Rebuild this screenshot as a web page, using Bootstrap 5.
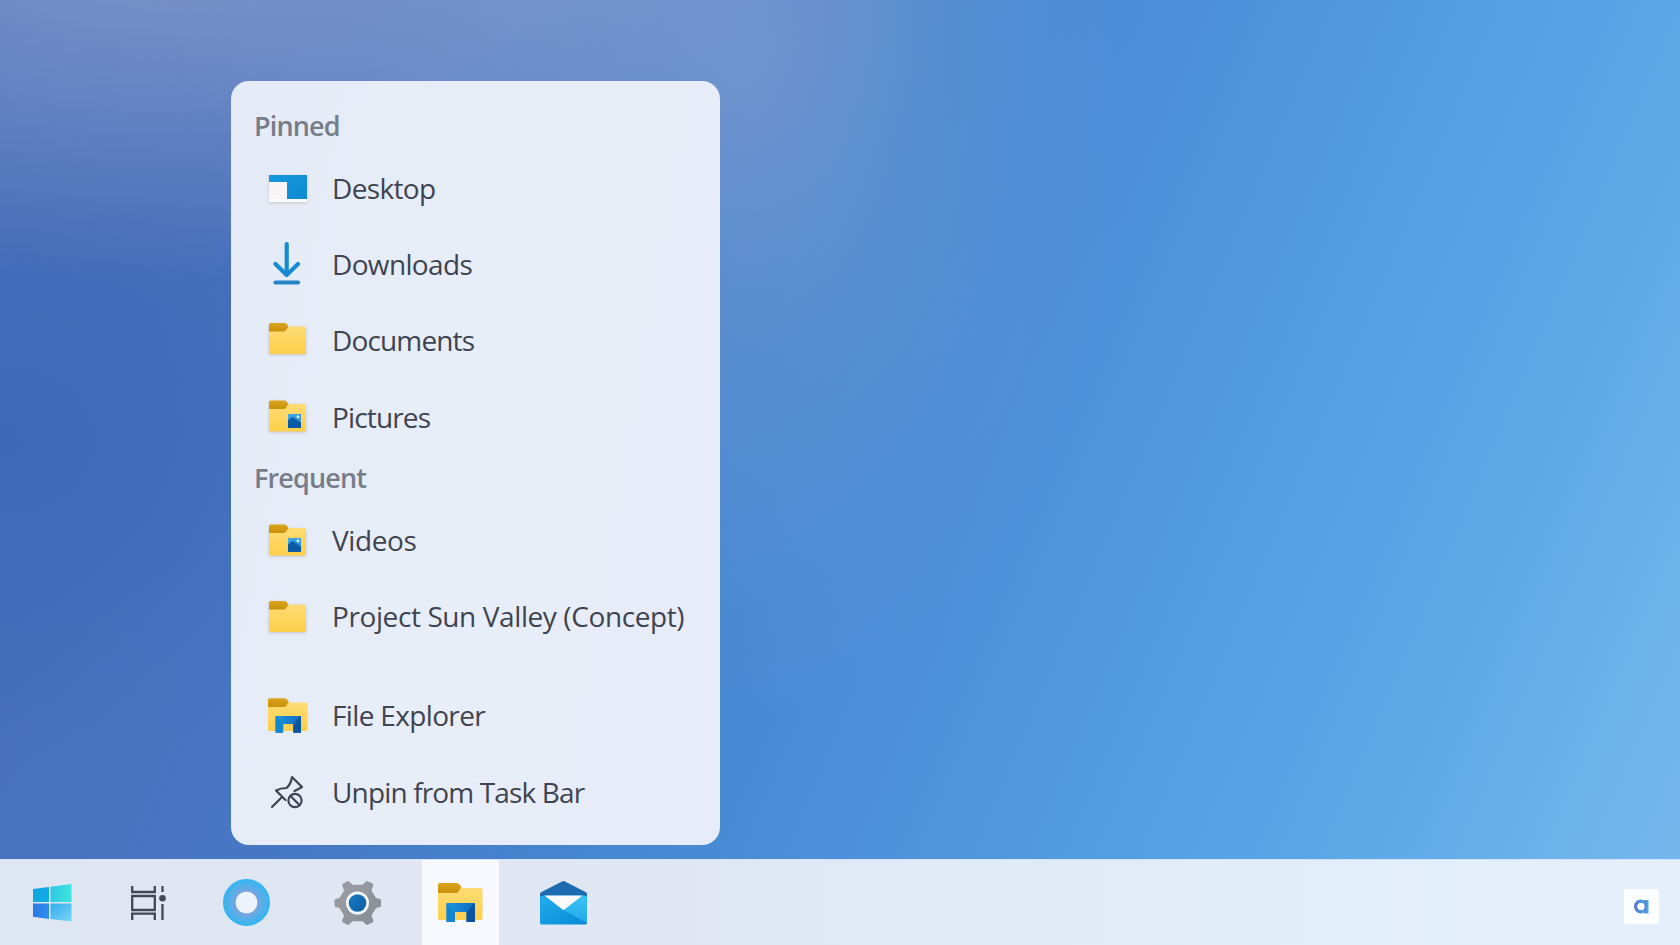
<!DOCTYPE html>
<html lang="en">
<head>
  <meta charset="UTF-8" />
  <meta name="viewport" content="width=device-width, initial-scale=1.0" />
  <title>Desktop</title>
  <link href="https://cdn.jsdelivr.net/npm/bootstrap@5.3.3/dist/css/bootstrap.min.css" rel="stylesheet" />
  <style>
    body {
      font-family: "Open Sans", "Noto Sans", sans-serif;
      color: #3f4450;
      background:
        radial-gradient(ellipse 760px 330px at 160px -50px, rgba(128,150,202,.95), rgba(125,148,200,0)),
        radial-gradient(ellipse 420px 260px at 560px -20px, rgba(108,148,205,.85), rgba(108,148,205,0)),
        radial-gradient(ellipse 380px 660px at 750px 60px, rgba(112,150,208,.9), rgba(104,150,211,.5) 45%, rgba(104,150,213,0)),
        radial-gradient(ellipse 420px 330px at 0 440px, rgba(50,98,178,.5), rgba(50,98,178,0)),
        linear-gradient(113deg, #466fba 0%, #4670bb 14%, #4874bf 22%, #4778c5 32%, #4586d0 45%, #4a8ed8 55%, #5099de 66%, #56a3e5 76%, #5ca9e7 83%, #69b2eb 91%, #77b9ed 100%);
    }

    /* jump list */
    .jump-list {
      width: 489px;
      height: 764px;
      margin-left: 231px;
      margin-bottom: 14px;
      padding: 22px 23px 0;
      border-radius: 18px;
      background: linear-gradient(100deg, #e5ebf6, #e8eef8 45%, #e7ecf8);
    }
    .jump-heading {
      height: 47px;
      font-size: 27px;
      font-weight: 600;
      color: #777c89;
    }
    .jump-item {
      height: 76.3px;
      padding-left: 12px;
      gap: 23px;
      font-size: 28px;
      white-space: nowrap;
    }
    .jump-item svg { width: 43px; height: 43px; flex: none; overflow: visible; }
    .jump-item span { margin-top: -1px; }
    .jump-gap { height: 23px; }

    /* tracking, tight to loose */
    .track-2 { letter-spacing: -.85px; }
    .track-3 { letter-spacing: -.65px; }
    .track-4 { letter-spacing: -.4px; }

    /* taskbar */
    .taskbar {
      height: 86px;
      border-top: 1px solid #d5e4f6;
      background: linear-gradient(90deg, #dee6f1, #e0e7f3 25%, #e0e8f4 45%, #e1edf9 75%, #e4effb);
    }
    .task-btn { height: 85px; }
    .task-btn svg { overflow: visible; }
    .task-start { width: 104px; }
    .task-view { width: 88px; }
    .task-cortana { width: 109px; }
    .task-settings { width: 121px; padding-right: 8px; }
    .task-files { width: 77px; background: #f7f9fe; }
    .task-mail { width: 129px; }
    .tray-logo { width: 35px; height: 35px; margin: 8px 21px 0 0; background: #fbfdff; }
  </style>
</head>
<body class="vh-100 overflow-hidden d-flex flex-column justify-content-end">

  <!-- shared icon parts -->
  <svg width="0" height="0" class="position-absolute">
    <defs>
      <linearGradient id="gFolder" x2="0" y2="1"><stop stop-color="#fedb75"/><stop offset="1" stop-color="#fdcf49"/></linearGradient>
      <linearGradient id="gTab" x2="0" y2="1"><stop stop-color="#dca51d"/><stop offset="1" stop-color="#c8900b"/></linearGradient>
      <linearGradient id="gBlue" x2="1" y2="1"><stop stop-color="#1697dc"/><stop offset="1" stop-color="#0d8bd3"/></linearGradient>
      <linearGradient id="gPic" x2="1" y2="1"><stop stop-color="#2d9be0"/><stop offset=".5" stop-color="#0b67b5"/><stop offset="1" stop-color="#0b4f94"/></linearGradient>
      <linearGradient id="gArch" x2="1" y2="0"><stop stop-color="#2097e0"/><stop offset="1" stop-color="#0d6cbd"/></linearGradient>
      <filter id="soft" x="-20%" y="-20%" width="140%" height="150%"><feDropShadow dx="0" dy="1" stdDeviation="1.5" flood-color="#7a6a70" flood-opacity=".35"/></filter>
      <symbol id="folder" viewBox="0 0 43 43" overflow="visible">
        <g filter="url(#soft)">
          <path d="M3 9h15l3-2h17.500q1.500 0 1.500 1.500V33q0 1.500-1.500 1.500h-34Q3 34.500 3 33z" fill="url(#gFolder)"/>
          <path d="M3 5q0-1.500 1.500-1.500H18q1.500 0 2.500 1l2 2.500-2.500 3.500q-1 1.500-2.500 1.500H3z" fill="url(#gTab)"/>
        </g>
      </symbol>
      <symbol id="picture" viewBox="0 0 13 14">
        <path d="M0 0h13v14H0z" fill="url(#gPic)"/>
        <path d="M0 0h13v9L8 5 5 3 0 6z" fill="#46b1e9" opacity=".7"/>
        <path d="M0 7l4-4 5 5 1-1 3 2v5H0z" fill="#0a5ba6"/>
        <circle cx="10" cy="2.800" r="1.500" fill="#c9edff"/>
      </symbol>
      <symbol id="explorer" viewBox="0 0 45 39" overflow="visible">
        <path d="M0 8h20l3-3h20q1.500 0 1.500 1.500V35q0 2-2 2H2q-2 0-2-2z" fill="url(#gFolder)"/>
        <path d="M0 2q0-2 2-2h16.500q1.500 0 2.500 1l2.500 3-3 4.500Q19.500 10 18 10H0z" fill="url(#gTab)"/>
        <path d="M8.500 20h28.500v19h-8.500V29H17v10H8.500z" fill="url(#gArch)"/>
        <path d="M28.500 29l8.500-9v19h-8.500z" fill="#0a55a2"/>
        <path d="M8.500 20L17 29v10H8.500z" fill="#1186d2"/>
      </symbol>
    </defs>
  </svg>

  <main class="jump-list">
    <div class="jump-heading d-flex align-items-center track-2">Pinned</div>
    <div class="jump-item d-flex align-items-center">
      <svg viewBox="0 0 43 43">
        <g filter="url(#soft)"><path d="M3 8h38v27H3z" fill="#fbfbfd"/></g>
        <path d="M3 8h38v24H21V15H3z" fill="url(#gBlue)"/>
        <path d="M3 15h18v17H3z" fill="#f7f3f6"/>
      </svg>
      <span class="track-3">Desktop</span>
    </div>
    <div class="jump-item d-flex align-items-center">
      <svg viewBox="0 0 43 43" fill="none" stroke="#188bd0" stroke-width="4.200" stroke-linecap="round" stroke-linejoin="round">
        <path d="M20.700 1v31M9.500 21l11.200 11L32 21"/>
        <path d="M9.500 39.500H32" stroke="#2283c7"/>
      </svg>
      <span class="track-3">Downloads</span>
    </div>
    <div class="jump-item d-flex align-items-center">
      <svg viewBox="0 -.5 43 43"><use href="#folder" width="43" height="43"/></svg>
      <span class="track-2">Documents</span>
    </div>
    <div class="jump-item d-flex align-items-center">
      <svg viewBox="0 -1 43 43"><use href="#folder" width="43" height="43"/><use href="#picture" x="22" y="17" width="13" height="14"/></svg>
      <span class="track-2">Pictures</span>
    </div>
    <div class="jump-heading d-flex align-items-center track-2">Frequent</div>
    <div class="jump-item d-flex align-items-center">
      <svg viewBox="0 -2 43 43"><use href="#folder" width="43" height="43"/><use href="#picture" x="22" y="17" width="13" height="14"/></svg>
      <span class="track-4">Videos</span>
    </div>
    <div class="jump-item d-flex align-items-center">
      <svg viewBox="0 -2.500 43 43"><use href="#folder" width="43" height="43"/></svg>
      <span class="track-4">Project Sun Valley (Concept)</span>
    </div>
    <div class="jump-gap"></div>
    <div class="jump-item d-flex align-items-center">
      <svg viewBox="0 0 43 43"><use href="#explorer" x="2" y="4" width="40" height="35"/></svg>
      <span class="track-3">File Explorer</span>
    </div>
    <div class="jump-item d-flex align-items-center">
      <svg viewBox="0 0 43 43" fill="none" stroke="#3f4450" stroke-width="2.200" stroke-linejoin="round" stroke-linecap="round">
        <path d="M6 36l10-10M19.500 29L10 19.500q4.500-2.500 10.500-2.500 4.500-4 5.500-11L36 16q-3.500 2-7.500 4"/>
        <circle cx="29" cy="29.500" r="6.600"/>
        <path d="M24.500 25l9 9"/>
      </svg>
      <span class="track-2">Unpin from Task Bar</span>
    </div>
  </main>

  <footer class="taskbar d-flex flex-shrink-0">
    <div class="task-btn task-start d-flex align-items-center justify-content-center">
      <svg width="39" height="38" viewBox="0 0 39 38">
        <defs>
          <linearGradient id="w1" x2="1" y2="1"><stop stop-color="#10a6e0"/><stop offset="1" stop-color="#12a9e8"/></linearGradient>
          <linearGradient id="w2" x2="1" y2="0"><stop stop-color="#30c8e4"/><stop offset="1" stop-color="#3de4df"/></linearGradient>
          <linearGradient id="w3" x2="1" y2="0"><stop stop-color="#2c77e4"/><stop offset="1" stop-color="#2d8eee"/></linearGradient>
          <linearGradient id="w4" x2="1" y2="1"><stop stop-color="#35acec"/><stop offset="1" stop-color="#7bd6f7"/></linearGradient>
        </defs>
        <path d="M0 5l16-2v15H0z" fill="url(#w1)"/><path d="M17.500 2.800L38.500 0v18h-21z" fill="url(#w2)"/>
        <path d="M0 19.500h16V35L0 32.800z" fill="url(#w3)"/><path d="M17.500 19.500h21v18l-21-2.500z" fill="url(#w4)"/>
      </svg>
    </div>
    <div class="task-btn task-view d-flex align-items-center justify-content-center">
      <svg width="35" height="34" viewBox="0 0 35 34" fill="none" stroke="#424754" stroke-width="2.300">
        <path d="M1.200 0v6h22.600V0M1.200 10h22.600v14H1.200zM1.200 34v-6.300h22.600V34M31.500 0v6M31.500 18v16"/>
        <circle cx="31.500" cy="12.300" r="3.300" fill="#424754" stroke="none"/>
      </svg>
    </div>
    <div class="task-btn task-cortana d-flex align-items-center justify-content-center">
      <svg width="47" height="47" viewBox="0 0 47 47">
        <defs><radialGradient id="ring" gradientUnits="userSpaceOnUse" cx="23.500" cy="23.500" r="23.500"><stop offset=".45" stop-color="#7ba3df"/><stop offset=".75" stop-color="#50b0ea"/><stop offset="1" stop-color="#33b5f1"/></radialGradient></defs>
        <circle cx="23.500" cy="23.500" r="17" fill="none" stroke="url(#ring)" stroke-width="13"/>
        <circle cx="23.500" cy="23.500" r="10.800" fill="#eef2fb"/>
      </svg>
    </div>
    <div class="task-btn task-settings d-flex align-items-center justify-content-center">
      <svg width="47" height="44" viewBox="0 0 47 44">
        <defs>
          <linearGradient id="gear" x2="1" y2="1"><stop stop-color="#9ca0a6"/><stop offset="1" stop-color="#878c94"/></linearGradient>
          <linearGradient id="hub" x2="1" y2="1"><stop stop-color="#1a7cc6"/><stop offset="1" stop-color="#0c5ca2"/></linearGradient>
        </defs>
        <path d="M13 0.500q1-.8 2 0l3.500 3.200h10L32 .5q1-.8 2 0l4.500 2q1 .7.800 1.800l-1.800 5.200 4.500 7.500 4 1q1 .3 1 1.500v5q0 1.200-1 1.500l-4 1-4.500 7.500 1.800 5.200q.2 1.100-.8 1.800l-4.500 2q-1 .8-2 0l-3.500-3.200h-10L15 43.500q-1 .8-2 0l-4-2q-1-.7-.8-1.800L10 34.500 5.500 27l-4-1Q.5 25.700.5 24.500v-5q0-1.200 1-1.500l4-1L10 9.500 8.200 4.300Q8 3.200 9 2.500z" fill="url(#gear)"/>
        <circle cx="23.500" cy="22" r="11.500" fill="#f4f7fb"/>
        <circle cx="23.500" cy="22" r="8.800" fill="url(#hub)"/>
      </svg>
    </div>
    <div class="task-btn task-files d-flex align-items-center justify-content-center">
      <svg width="45" height="39"><use href="#explorer" width="45" height="39"/></svg>
    </div>
    <div class="task-btn task-mail d-flex align-items-center justify-content-center">
      <svg width="47" height="44" viewBox="0 0 47 44">
        <defs>
          <linearGradient id="mail" x2="1" y2="1"><stop stop-color="#22aced"/><stop offset="1" stop-color="#0789d7"/></linearGradient>
          <linearGradient id="mailSide" x2="0" y2="1"><stop stop-color="#38c3f4"/><stop offset="1" stop-color="#21a9e9"/></linearGradient>
        </defs>
        <path d="M0 13Q0 12 1 11.300L22 .5q1.500-.8 3 0l21 10.800q1 .7 1 1.700v5H0z" fill="#1d6bb0"/>
        <path d="M0 15.500l4.500-1h38l4.500 1V42q0 1.500-1.500 1.500h-44Q0 43.500 0 42z" fill="url(#mail)"/>
        <path d="M23.500 29l19-14.500 4.500 1V42z" fill="url(#mailSide)"/>
        <path d="M4.500 14.500h38L24.500 28.500q-1 .8-2 0z" fill="#fafafa"/>
      </svg>
    </div>
    <div class="tray-logo d-flex align-items-center justify-content-center ms-auto align-self-center">
      <svg width="15" height="15" viewBox="0 0 15 15">
        <defs><linearGradient id="logo" x2="1" y2="0"><stop stop-color="#5a79cf"/><stop offset="1" stop-color="#48b1ec"/></linearGradient></defs>
        <circle cx="7" cy="7.500" r="5.300" fill="none" stroke="url(#logo)" stroke-width="3.400"/>
        <path d="M10.500 1h4v13.500h-4z" fill="url(#logo)"/>
        <circle cx="7" cy="7.500" r="3.500" fill="#fbfdff"/>
      </svg>
    </div>
  </footer>

  <script src="https://cdn.jsdelivr.net/npm/bootstrap@5.3.3/dist/js/bootstrap.bundle.min.js"></script>
</body>
</html>
